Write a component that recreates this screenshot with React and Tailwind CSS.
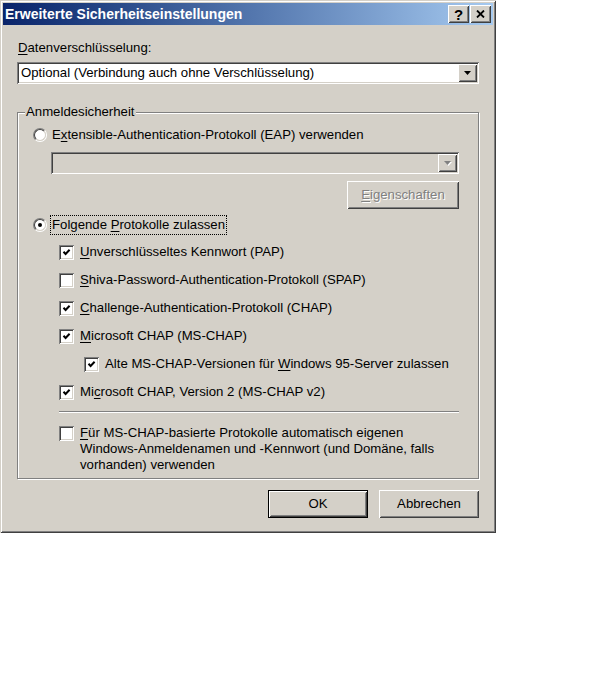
import React from 'react';

const sunken = 'shadow-[inset_1px_1px_#808080,inset_-1px_-1px_#ffffff,inset_2px_2px_#404040,inset_-2px_-2px_#d4d0c8]';
const raised = 'shadow-[inset_1px_1px_#ffffff,inset_-1px_-1px_#404040,inset_2px_2px_#d4d0c8,inset_-2px_-2px_#808080]';

function U({ children }) {
    return <span className="underline underline-offset-[2px] decoration-1">{children}</span>;
}

function Check({ checked }) {
    return (
        <div className={`w-[15px] h-[15px] shrink-0 bg-white flex items-center justify-center ${sunken}`}>
            {checked && (
                <svg width="9" height="9" viewBox="0 0 9 9">
                    <path d="M1.5 3.8 L3.6 6 L7.6 1.8" fill="none" stroke="#000" strokeWidth="2" />
                </svg>
            )}
        </div>
    );
}

function Radio({ on }) {
    return (
        <div className="w-[14px] h-[14px] shrink-0 rounded-full border border-t-[#808080] border-l-[#808080] border-b-white border-r-white">
            <div className="w-full h-full rounded-full border border-t-[#404040] border-l-[#404040] border-b-[#d4d0c8] border-r-[#d4d0c8] bg-white flex items-center justify-center">
                {on && <div className="w-[4px] h-[4px] rounded-full bg-black" />}
            </div>
        </div>
    );
}

function Arrow({ disabled }) {
    return (
        <svg width="8" height="5" viewBox="0 0 8 5" className="overflow-visible">
            {disabled && <polygon points="1,1 8,1 4.5,5" fill="#ffffff" />}
            <polygon points="0,0 7,0 3.5,4" fill={disabled ? '#808080' : '#000'} />
        </svg>
    );
}

function Row({ checked, children, indent }) {
    return (
        <div className={`h-[28px] flex items-center ${indent ? 'pl-[66px]' : 'pl-[41px]'}`}>
            <Check checked={checked} />
            <span className="ml-[6px]">{children}</span>
        </div>
    );
}

export default function App() {
    return (
        <div className="min-h-screen bg-white text-[13.2px] leading-[16px] text-black" style={{ fontFamily: '"Liberation Sans", Arial, sans-serif' }}>
            <div className="w-[496px] h-[533px] bg-[#d4d0c8] p-[3px] flex flex-col shadow-[inset_1px_1px_#d4d0c8,inset_-1px_-1px_#404040,inset_2px_2px_#ffffff,inset_-2px_-2px_#808080]">
                {/* Title bar */}
                <div className="h-[22px] bg-linear-to-r from-[#0a246a] to-[#a6caf0] flex items-center pl-[2px] pr-[2px]">
                    <span className="text-white font-bold text-[14px] flex-1">Erweiterte Sicherheitseinstellungen</span>
                    <div className={`w-[21px] h-[18px] bg-[#d4d0c8] flex items-center justify-center font-bold text-[15px] leading-none ${raised}`}>?</div>
                    <div className={`ml-[1px] w-[21px] h-[18px] bg-[#d4d0c8] flex items-center justify-center ${raised}`}>
                        <svg width="9" height="8" viewBox="0 0 9 8">
                            <path d="M1 0.5 L8 7.5 M8 0.5 L1 7.5" stroke="#000" strokeWidth="1.8" />
                        </svg>
                    </div>
                </div>

                <div className="px-[14px] flex flex-col">
                    <div className="mt-[15px] pl-[1px]"><U>D</U>atenverschlüsselung:</div>
                    <div className={`mt-[6px] h-[22px] bg-white flex items-center pl-[4px] pr-[2px] ${sunken}`}>
                        <span className="flex-1">Optional (Verbindung auch ohne Verschlüsselung)</span>
                        <div className={`w-[19px] h-[18px] bg-[#d4d0c8] flex items-center justify-center ${raised}`}>
                            <Arrow />
                        </div>
                    </div>

                    {/* Group box */}
                    <div className="relative mt-[28px] border border-[#808080] shadow-[inset_1px_1px_#ffffff,1px_1px_#ffffff] pt-[12px] pb-[5px] flex flex-col">
                        <span className="absolute -top-[9px] left-[7px] px-[1px] bg-[#d4d0c8]">Anmeldesicherheit</span>

                        <div className="h-[20px] flex items-center pl-[15px]">
                            <Radio />
                            <span className="ml-[5px]">E<U>x</U>tensible-Authentication-Protokoll (EAP) verwenden</span>
                        </div>
                        <div className={`mt-[7px] ml-[33px] mr-[19px] h-[22px] bg-[#d4d0c8] flex items-center justify-end pr-[2px] ${sunken}`}>
                            <div className={`w-[19px] h-[18px] bg-[#d4d0c8] flex items-center justify-center ${raised}`}>
                                <Arrow disabled />
                            </div>
                        </div>
                        <div className="mt-[7px] mr-[19px] self-end">
                            <div className={`w-[112px] h-[28px] flex items-center justify-center text-[#808080] [text-shadow:1px_1px_#ffffff] ${raised}`}>
                                <span><U>E</U>igenschaften</span>
                            </div>
                        </div>

                        <div className="mt-[6px] h-[20px] flex items-center pl-[15px]">
                            <Radio on />
                            <span className="ml-[4px] px-[1px] py-[1px] outline outline-1 outline-dotted outline-black">Folgende <U>P</U>rotokolle zulassen</span>
                        </div>

                        <div className="mt-[3px]">
                            <Row checked><U>U</U>nverschlüsseltes Kennwort (PAP)</Row>
                            <Row><U>S</U>hiva-Password-Authentication-Protokoll (SPAP)</Row>
                            <Row checked><U>C</U>hallenge-Authentication-Protokoll (CHAP)</Row>
                            <Row checked><U>M</U>icrosoft CHAP (MS-CHAP)</Row>
                            <Row checked indent>Alte MS-CHAP-Versionen für <U>W</U>indows 95-Server zulassen</Row>
                            <Row checked>Mi<U>c</U>rosoft CHAP, Version 2 (MS-CHAP v2)</Row>
                        </div>

                        <div className="mt-[5px] ml-[41px] mr-[19px] h-[2px] border-t border-t-[#808080] border-b border-b-white" />

                        <div className="mt-[12px] pl-[41px] pr-[30px] flex items-start">
                            <div className="mt-[1px]"><Check /></div>
                            <p className="ml-[6px] leading-[16px]"><U>F</U>ür MS-CHAP-basierte Protokolle automatisch eigenen Windows-Anmeldenamen und -Kennwort (und Domäne, falls vorhanden) verwenden</p>
                        </div>
                    </div>

                    <div className="mt-[11px] flex justify-end gap-[11px]">
                        <div className="w-[100px] h-[28px] border border-black">
                            <div className={`w-full h-full flex items-center justify-center ${raised}`}>OK</div>
                        </div>
                        <div className={`w-[100px] h-[28px] flex items-center justify-center ${raised}`}>Abbrechen</div>
                    </div>
                </div>
            </div>
        </div>
    );
}
